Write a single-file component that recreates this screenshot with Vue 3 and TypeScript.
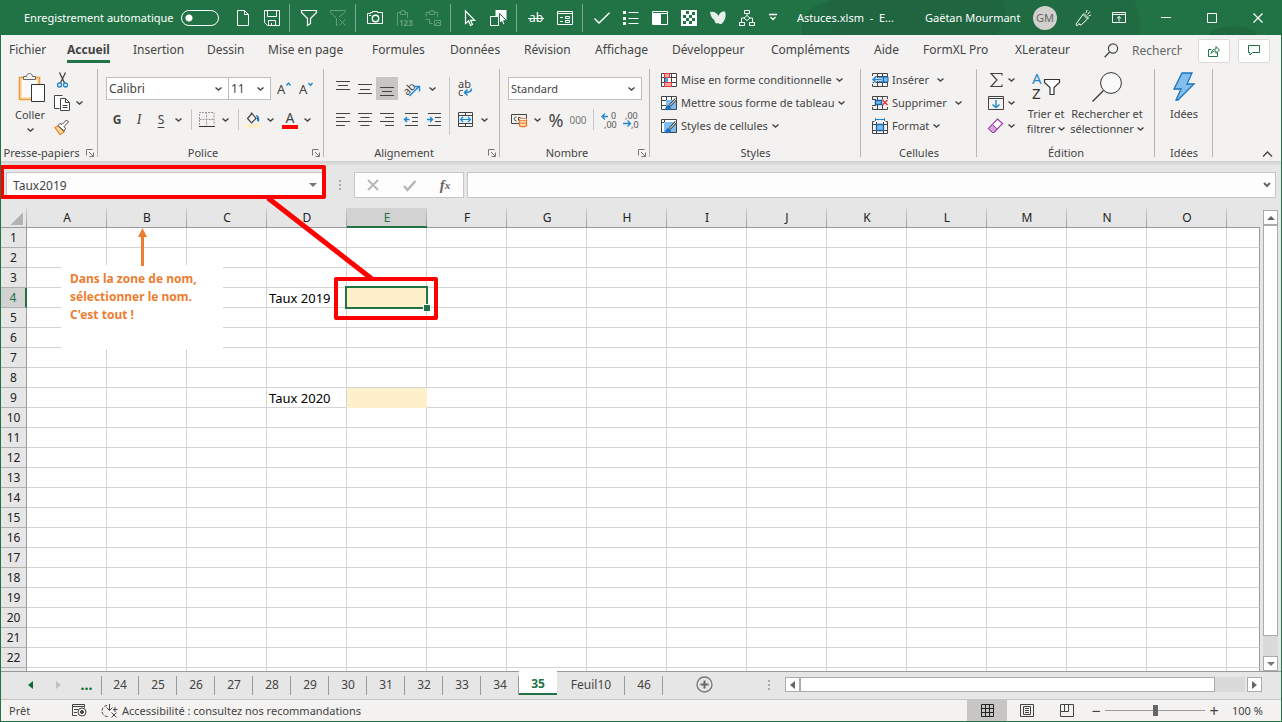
<script setup lang="ts">
import { computed, h, onBeforeUnmount, onMounted, ref } from 'vue'

interface IconShape { w: number; h: number; body: string }

const shapes: Record<string, IconShape> = {
  chevron: { w: 7, h: 4, body: '<path d="M.5 .5l3 2.600 3-2.600" stroke-width="1.400"/>' },
  chevronUp: { w: 11, h: 6, body: '<path d="M1 5.500l4.500-4.500 4.500 4.500" stroke-width="1.400"/>' },
  launcher: { w: 8, h: 8, body: '<path d="M.5 6.500v-6h6M3 3l4 4M7.500 3.500v4h-4" stroke="#777"/>' },
  page: { w: 16, h: 16, body: '<path d="M2.500 .5h7l4 4v11h-11zM9.500 .5v4h4"/>' },
  save: { w: 16, h: 16, body: '<path d="M.5 .5h15v15h-12l-3-3zM3.500 .5v6h9v-6M4.500 15.500v-5h7v5M7.500 13v2"/>' },
  filter: { w: 16, h: 16, body: '<path d="M.5 .5h15v2l-6 6v5l-3 2v-7l-6-6z" stroke-width="1.200"/>' },
  filterOff: { w: 16, h: 16, body: '<path d="M9 7l6.500-5v-1.500h-15v2l6 6v7l1.500-1M9.500 9.500l6 6M15.500 9.500l-6 6"/>' },
  camera: { w: 16, h: 14, body: '<path d="M.5 2.500h3v-1h2v-1h5v1h5v11h-15zM2 4.500h2"/><circle cx="8.500" cy="7.500" r="3.200" stroke-width="1.400"/>' },
  paste123: { w: 16, h: 16, body: '<path d="M4 2.500h-2.500v13M11.500 8v-5.500h-2M4.500 4.500v-3h1.500v-1h2v1h1.500v3z"/><text x="3" y="16" font-size="8" font-weight="700" fill="currentColor" stroke="none">123</text>' },
  pasteShape: { w: 16, h: 16, body: '<path d="M4 2.500h-3v4M.5 9.500h4v4h3M12.500 7v-4.500h-3M4.500 4.500v-3h1.500v-1h2v1h1.500v3zM9.500 10.500h6v5h-6zM10 15l3-3 2 2"/>' },
  cursor: { w: 12, h: 16, body: '<path d="M1.500 1v12.500l3-2.500 2 4.500 2-1-2-4.200h4.200z" stroke-width="1.200"/>' },
  cursorShape: { w: 17, h: 16, body: '<rect x="5.500" y="0" width="11" height="10" fill="#fff" stroke="none"/><path d="M.5 6.500h8v9h-8z" fill="#217346"/><path d="M9.500 3.500v10l2.300-2 1.500 3.500 1.700-1-1.400-3.300h3z" fill="#fff" stroke="#217346"/>' },
  strike: { w: 16, h: 14, body: '<text x="1" y="11" font-size="12" fill="currentColor" stroke="none">ab</text><path d="M0 7.500h16"/>' },
  form: { w: 16, h: 14, body: '<path d="M.5 .5h15v13h-15zM.5 2.500h15M3 6.500h3M3 10.500h3M8.500 5.500h4v2h-4zM8.500 9.500h4v2h-4z"/>' },
  check: { w: 16, h: 12, body: '<path d="M.5 6.500l4.500 4.500L15.500 .8" stroke-width="1.400"/>' },
  list: { w: 16, h: 14, body: '<path d="M5.500 1.500h10M5.500 7.500h10M5.500 12.500h10"/><path d="M0 0h3v3h-3zM0 6h3v3h-3zM0 11h3v3h-3z" fill="currentColor" stroke="none"/>' },
  pane: { w: 16, h: 14, body: '<path d="M.5 .5h15v13h-15zM1 2.500h14"/><path d="M1 3h8v10h-8z" fill="currentColor" stroke="none"/>' },
  checker: { w: 16, h: 16, body: '<rect width="16" height="16" fill="#fff" stroke="none"/><path d="M5 1h3v3h-3zM2 5h3v3h-3zM8 5h3v3h-3zM5 8h3v3h-3zM11 8h3v3h-3zM2 11h3v3h-3zM8 11h3v3h-3zM11 2h3v3h-3z" fill="#217346" stroke="none"/>' },
  butterfly: { w: 16, h: 14, body: '<path d="M0 1c4-1 7 1 8.500 4 1-3 3-5 6.500-4.500 1.500 5 0 9-3 12-2 1-3 .5-3.500-.5-2 1-4 0-4-3-2-1-4-4-4.500-8z" fill="#e8f0eb" stroke="none"/>' },
  tree: { w: 16, h: 16, body: '<path d="M5.500 .5h5v3h-5zM8 3.500v2M8 5.500l3 2.500-3 2.500-3-2.500zM5 8h-2.500v4M11 8h2.500v4M.5 12.500h5v3h-5zM10.500 12.500h5v3h-5z"/>' },
  more: { w: 8, h: 7, body: '<path d="M0 .5h8M1.500 3l2.500 2.500 2.500-2.500" stroke-width="1.300"/>' },
  torch: { w: 16, h: 16, body: '<path d="M1.500 15.500l-.5-1.500 7-9.500 4.500 4.500-6.500 6h-1l-1-1.500-1.500 2zM8 4.500l1-1 4.500 4.500-1 1M11 3l1-3M12.500 4.500l2.500-3M13.500 6l2.500-1"/>' },
  ribbonView: { w: 14, h: 11, body: '<path d="M.5 .5h13v10h-13zM.5 2.500h13M7 9.500v-5M4.800 6.500l2.200-2 2.200 2"/>' },
  minimize: { w: 10, h: 10, body: '<path d="M0 4.500h10"/>' },
  maximize: { w: 10, h: 10, body: '<path d="M.5 .5h9v9h-9z"/>' },
  close: { w: 10, h: 10, body: '<path d="M.5 .5l9 9M9.500 .5l-9 9" stroke-width="1.200"/>' },
  search: { w: 15, h: 15, body: '<circle cx="9" cy="5.500" r="4.600" stroke-width="1.200"/><path d="M5.600 9l-5 5.200" stroke-width="1.300"/>' },
  share: { w: 12, h: 12, body: '<path d="M3.500 4.500h-3v7h9v-4M3 8.500c.5-3 2.500-4.500 5-4.500v-2.500l3.500 3.500-3.500 3.500v-2.500c-2 0-3.500.5-5 2.500z" stroke="#217346"/>' },
  comment: { w: 12, h: 11, body: '<path d="M.5 .5h11v7h-7l-2.500 2.500v-2.500h-1.500z" stroke="#217346"/>' },
  paste: { w: 32, h: 31, body: '<g transform="translate(4 0)"><path d="M1.500 5.500h20v22h-20z" fill="#fbe2ae" stroke="#eb9a3c" stroke-width="1.600"/><path d="M4 8h15v17h-15z" fill="#fafafa" stroke="none"/><path d="M5.500 7.500v-3h3c0-4 6-4 6 0h3v3z" fill="#f3f2f1" stroke="#666"/><path d="M13.500 12.500h13v17h-13z" fill="#fff" stroke="#333"/></g>' },
  cut: { w: 11, h: 16, body: '<path d="M2.500 .5l5 10.500M8.500 .5l-5 10.500" stroke="#444" stroke-width="1.300"/><circle cx="2.500" cy="13" r="2" stroke="#1f86cf" stroke-width="1.300"/><circle cx="8.500" cy="13" r="2" stroke="#1f86cf" stroke-width="1.300"/>' },
  copy: { w: 16, h: 16, body: '<path d="M5.500 13.500h-5v-13h8M6.500 3.500h5l4 4v8h-9z" fill="#fff"/><path d="M11.500 3.500v4h4M8.500 10.500h5M8.500 12.500h5"/>' },
  brush: { w: 16, h: 16, body: '<path d="M1 8.500l3-1.500 6 6-4 2.500z" fill="#fbe2ae" stroke="#eb8a2c" stroke-width="1.300"/><path d="M4 6.500l2-2 2 1 4.500-4.500 2 2-4.500 4.500 1.500 2-1.500 2.500z" fill="#fff" stroke="#444"/>' },
  grow: { w: 14, h: 14, body: '<text x="0" y="12" font-size="13" fill="#444" stroke="none">A</text><path d="M9.500 3.500l2-2.500 2 2.500" stroke="#1f86cf" stroke-width="1.300"/>' },
  shrink: { w: 14, h: 14, body: '<text x="0" y="12" font-size="13" fill="#444" stroke="none">A</text><path d="M9.500 1l2 2.500 2-2.500" stroke="#1f86cf" stroke-width="1.300"/>' },
  border: { w: 16, h: 15, body: '<path d="M.5 13v-12.500h14.500v12.500M.5 7.500h15M7.500 .5v13" stroke="#999" stroke-dasharray="2 1"/><path d="M0 14.500h16" stroke="#333"/>' },
  fill: { w: 16, h: 16, body: '<path d="M2.500 6.500l4.500-5 4 5-4.500 4.500zM5 4l2-3.500" stroke="#444" stroke-width="1.200"/><path d="M11 3c2 .5 4 2 3 7l-2-1.500v-2z" fill="#1f6fbf" stroke="none"/><path d="M0 12h16v4h-16z" fill="#fff0cc" stroke="none"/>' },
  fontColor: { w: 16, h: 18, body: '<text x="3.500" y="12" font-size="14" fill="#444" stroke="none">A</text><path d="M0 14h16v4h-16z" fill="#f00" stroke="none"/>' },
  top: { w: 14, h: 15, body: '<path d="M0 .5h14M2 4.500h10M0 8.500h14"/>' },
  middle: { w: 14, h: 15, body: '<path d="M0 3.500h14M2 8.500h10M0 12.500h14"/>' },
  bottom: { w: 14, h: 15, body: '<path d="M0 6.500h14M2 10.500h10M0 14.500h14"/>' },
  left: { w: 14, h: 13, body: '<path d="M0 .5h14M0 4.500h9M0 8.500h14M0 12.500h9"/>' },
  center: { w: 14, h: 13, body: '<path d="M0 .5h14M2.500 4.500h9M0 8.500h14M2.500 12.500h9"/>' },
  right: { w: 14, h: 13, body: '<path d="M0 .5h14M5 4.500h9M0 8.500h14M5 12.500h9"/>' },
  outdent: { w: 14, h: 13, body: '<path d="M1 .5h13M8 4.500h6M8 8.500h6M1 12.500h13"/><path d="M.5 6.500h5M3 4l-2.500 2.500 2.500 2.500" stroke="#1f86cf" stroke-width="1.400"/>' },
  indent: { w: 14, h: 13, body: '<path d="M1 .5h13M8 4.500h6M8 8.500h6M1 12.500h13"/><path d="M0 6.500h5M3 4l2.500 2.500-2.500 2.500" stroke="#1f86cf" stroke-width="1.400"/>' },
  orient: { w: 17, h: 16, body: '<text x="-1" y="11" font-size="11" fill="#444" stroke="none" transform="rotate(-45 6 8)">ab</text><path d="M5.500 15l9.500-9.500M10.500 5.500h5v5" stroke="#1f86cf" stroke-width="1.400"/>' },
  wrap: { w: 15, h: 17, body: '<text x="0" y="8" font-size="11" fill="#444" stroke="none">ab</text><text x="0" y="16" font-size="11" fill="#444" stroke="none">c</text><path d="M13.500 8.500c0 3-2 4-6 4M9.500 9.500l-3 3 3 3" stroke="#1f86cf" stroke-width="1.500"/>' },
  merge: { w: 15, h: 15, body: '<path d="M.5 .5h14v14h-14zM.5 3.500h14M.5 11.500h14M7.500 .5v3M7.500 11.500v3"/><path d="M1 4h13v7h-13z" fill="#e3f1fb" stroke="none"/><path d="M2.500 7.500h10M5 5l-2.500 2.500 2.500 2.500M10 5l2.500 2.500-2.500 2.500" stroke="#1f86cf" stroke-width="1.200"/>' },
  money: { w: 16, h: 14, body: '<path d="M8 10.500h-7.500v-9h15v4M5.500 4c-3-.5-3 4 0 4M9.500 4.500h-2v3" /><path d="M8.500 6.500v6c0 1.500 7 1.500 7 0v-6" fill="#fbe2ae" stroke="#e8772e" stroke-width="1.300"/><ellipse cx="12" cy="6.500" rx="3.500" ry="1.300" fill="#fff" stroke="#e8772e"/><path d="M8.500 9.500c1 1.200 6 1.200 7 0" stroke="#e8772e"/>' },
  moreDec: { w: 16, h: 16, body: '<text x="10" y="7" font-size="9" fill="#555" stroke="none">0</text><text x="3" y="16" font-size="9" fill="#555" stroke="none">,00</text><path d="M1 4.500h6M4 1.500l-3 3 3 3" stroke="#1f86cf" stroke-width="1.300"/>' },
  lessDec: { w: 16, h: 16, body: '<text x="2" y="7" font-size="9" fill="#555" stroke="none">,00</text><text x="8" y="16" font-size="9" fill="#555" stroke="none">,0</text><path d="M0 11.500h7M4.500 8.500l3 3-3 3" stroke="#1f86cf" stroke-width="1.300"/>' },
  condFmt: { w: 16, h: 15, body: '<path d="M.5 .5h15v13h-15zM.5 4.500h15M.5 9.500h15M3.500 .5v13M10.500 .5v13" fill="#fff"/><path d="M3.500 .5h5v4h-5zM3.500 9.500h7v4h-7z" fill="#f7a5a5" stroke="#e23b3b"/><path d="M4 5h3v4h-3z" fill="#4ea0dc" stroke="none"/>' },
  tableFmt: { w: 16, h: 15, body: '<path d="M.5 .5h15v13h-15zM.5 4.500h15M.5 9.500h15M5.500 .5v13M10.500 .5v13" fill="#fff"/><path d="M5 4h10v9h-10z" fill="#7cbcf0" stroke="none"/><path d="M15 3l-6 6.500" stroke="#444" stroke-width="2.600"/><path d="M15 3l-6 6.500" stroke="#fff"/><path d="M4 14c0-3 2-5 4-5l2 2c0 3-3 3.500-6 3z" fill="#1f6fbf" stroke="none"/>' },
  cellStyle: { w: 16, h: 15, body: '<path d="M.5 .5h15v13h-15zM.5 3.500h15M3.500 .5v13" fill="#fff"/><path d="M3 3h12v10h-12z" fill="#7cbcf0" stroke="none"/><path d="M15 3l-6 6.500" stroke="#444" stroke-width="2.600"/><path d="M15 3l-6 6.500" stroke="#fff"/><path d="M4 14c0-3 2-5 4-5l2 2c0 3-3 3.500-6 3z" fill="#1f6fbf" stroke="none"/>' },
  insert: { w: 16, h: 14, body: '<path d="M.5 3v-2.500h15v13h-15v-2.500M5.500 .5v13M10.500 .5v13M.5 9.500h15M3 3.500h12"/><path d="M7 4h9v5h-9z" fill="#7cbcf0" stroke="#1766ab"/><path d="M11.500 4v5" stroke="#1766ab"/><path d="M1 6.500h8M4 3.500l-3 3 3 3" stroke="#f3f2f1" stroke-width="3"/><path d="M1 6.500h8M4 3.500l-3 3 3 3" stroke="#1f86cf" stroke-width="1.500"/>' },
  remove: { w: 16, h: 14, body: '<path d="M.5 3v-2.500h15v2.500M.5 11v2.500h15v-2.500M5.500 .5v13M10.500 .5v3M10.500 9v4.500M0 3.500h4M0 9.500h4"/><path d="M3.500 4.500h6v4h-6z" fill="#7cbcf0" stroke="#1766ab" stroke-width="1.500"/><path d="M10.500 4l5 5M15.500 4l-5 5" stroke="#e23b3b" stroke-width="1.500"/>' },
  format: { w: 16, h: 16, body: '<path d="M2.500 3.500h-2v12h15v-12h-2M.5 6.500h15M.5 12.500h15M4.500 4v12M11.500 4v12"/><path d="M4.500 6.500h7v6h-7z" fill="#7cbcf0" stroke="#1766ab" stroke-width="1.300"/><path d="M3.500 1.500h9M3.500 0v3M12.500 0v3" stroke="#1f86cf"/>' },
  sum: { w: 13, h: 14, body: '<path d="M12 2.500v-2h-11l6 6.500-6 6.500h11v-2" stroke-width="1.200"/>' },
  fillDown: { w: 16, h: 14, body: '<path d="M.5 .5h15v13h-15zM.5 2.500h15"/><path d="M8 4v7.500M4.500 8.500l3.500 3 3.500-3" stroke="#1f86cf" stroke-width="1.400"/>' },
  eraser: { w: 16, h: 16, body: '<path d="M9.500 1l5 4.500-8.500 9h-1.500l-4-4z" fill="#fff" stroke="#9a3fa8" stroke-width="1.200"/><path d="M4.500 6.500l4.500 4.500-3 3.500h-1.500l-4-4z" fill="#d9a0dc" stroke="#9a3fa8"/>' },
  sort: { w: 29, h: 30, body: '<text x="0" y="12" font-size="15" fill="#1f86cf" stroke="none">A</text><text x="0" y="27" font-size="15" fill="#333" stroke="none">Z</text><path d="M12.500 7.500h15v3l-5.500 5v7h-4v-7l-5.500-5z" fill="#fff" stroke="#333" stroke-width="1.200"/>' },
  find: { w: 30, h: 30, body: '<circle cx="19" cy="11" r="10.400" fill="#fafafa" stroke="#333"/><path d="M11.500 18.500l-11 11" stroke="#333" stroke-width="1.300"/>' },
  bolt: { w: 22, h: 30, body: '<path d="M9 1h10l-5 11h7l-16 16h-2l5-11h-7z" fill="#83beec" stroke="#1a72bd" stroke-width="1.300"/>' },
  cross: { w: 12, h: 12, body: '<path d="M1 1l10 10M11 1l-10 10" stroke="#b5b5b5" stroke-width="1.800"/>' },
  tick: { w: 13, h: 11, body: '<path d="M1 6l3.500 4 8-9" stroke="#b5b5b5" stroke-width="2.400"/>' },
  triDown: { w: 8, h: 4, body: '<path d="M0 0h8l-4 4z" fill="#777" stroke="none"/>' },
  triUp: { w: 8, h: 4, body: '<path d="M0 4h8l-4-4z" fill="#666" stroke="none"/>' },
  triLeft: { w: 5, h: 8, body: '<path d="M5 0v8l-5-4z" fill="currentColor" stroke="none"/>' },
  triRight: { w: 5, h: 8, body: '<path d="M0 0v8l5-4z" fill="currentColor" stroke="none"/>' },
  barChevron: { w: 8, h: 6, body: '<path d="M1 1l3 3 3-3" stroke="#666" stroke-width="2"/>' },
  dots: { w: 2, h: 10, body: '<path d="M0 0h2v2h-2zM0 4h2v2h-2zM0 8h2v2h-2z" fill="#aaa" stroke="none"/>' },
  add: { w: 17, h: 17, body: '<circle cx="8.500" cy="8.500" r="7.500" stroke="#777" stroke-width="1.300"/><path d="M8.500 4.500v8M4.500 8.500h8" stroke="#666" stroke-width="2"/>' },
  macro: { w: 15, h: 13, body: '<path d="M5 11.500h-4.500v-11h12v3M.5 2.500h12M2 5.500h4M2 8.500h3"/><circle cx="10" cy="8" r="4"/><circle cx="10" cy="8" r="1.500" fill="currentColor"/>' },
  access: { w: 16, h: 14, body: '<path d="M5 1.500a5.500 5.500 0 0 0 1 11" stroke-dasharray="3 1.500"/><path d="M7.500 0v6M4.500 3.500l3 3 3-3M13 3v5M11 5.500h4.500M9.500 8.500l5 5M14.500 8.500l-5 5"/>' },
  viewGrid: { w: 13, h: 13, body: '<path d="M.5 .5h12v12h-12zM.5 4.500h12M.5 8.500h12M4.500 .5v12M8.500 .5v12" stroke="#222"/>' },
  viewPage: { w: 14, h: 13, body: '<path d="M.5 .5h13v12h-13zM3.500 2.500h7v8h-7zM5 4.500h4M5 6.500h4M5 8.500h4"/>' },
  viewBreak: { w: 14, h: 13, body: '<path d="M.5 .5h13v12h-13zM4.500 .5v7M8.500 .5v7M.5 7.500h8"/>' },
}

const Icon = (props: { name: string }) => {
  const s = shapes[props.name]
  return h('svg', {
    width: s.w, height: s.h, viewBox: `0 0 ${s.w} ${s.h}`,
    fill: 'none', stroke: 'currentColor', 'aria-hidden': 'true', innerHTML: s.body,
  })
}
Icon.props = ['name']

const quickTools: string[][] = [
  ['page', 'save'],
  ['filter', '-filterOff'],
  ['camera', '-paste123', '-pasteShape'],
  ['cursor', 'cursorShape'],
  ['strike', 'form'],
  ['check', 'list', 'pane', 'checker', 'butterfly', 'tree'],
]
const ribbonTabs = ['Fichier', 'Accueil', 'Insertion', 'Dessin', 'Mise en page', 'Formules', 'Données', 'Révision', 'Affichage', 'Développeur', 'Compléments', 'Aide', 'FormXL Pro', 'XLerateur']
const columns = 'ABCDEFGHIJKLMNO'.split('')
const cells: Record<string, string> = { D4: 'Taux 2019', D9: 'Taux 2020' }
const sheets = ['24', '25', '26', '27', '28', '29', '30', '31', '32', '33', '34', '35', 'Feuil10', '46']
const styleTools = [
  ['condFmt', 'Mise en forme conditionnelle'],
  ['tableFmt', 'Mettre sous forme de tableau'],
  ['cellStyle', 'Styles de cellules'],
]
const cellTools = [['insert', 'Insérer'], ['remove', 'Supprimer'], ['format', 'Format']]

const activeTab = ref('Accueil')
const activeSheet = ref('35')
const nameBox = ref('Taux2019')
const formula = ref('')
const query = ref('')
const autoSave = ref(false)
const zoom = ref(100)

// Number of whole rows that fit; one unlabelled row fills the remainder.
const sheetEl = ref<HTMLElement | null>(null)
const sheetHeight = ref(460)
const fullRows = computed(() => Math.max(1, Math.floor((sheetHeight.value - 20) / 20)))
const measure = () => { if (sheetEl.value) sheetHeight.value = sheetEl.value.clientHeight }
onMounted(() => { measure(); window.addEventListener('resize', measure) })
onBeforeUnmount(() => window.removeEventListener('resize', measure))
</script>

<template>
  <div class="window">
    <header class="titlebar">
      <label class="autosave">Enregistrement automatique
        <input v-model="autoSave" type="checkbox" />
      </label>
      <div v-for="(group, i) in quickTools" :key="i" class="quick">
        <button v-for="t in group" :key="t" :class="{ dim: t[0] === '-' }" :aria-label="t"><Icon :name="t.replace('-', '')" /></button>
      </div>
      <button class="quick-more" aria-label="Personnaliser"><Icon name="more" /></button>
      <div class="doc-title">Astuces.xlsm&nbsp; -&nbsp; E...</div>
      <div class="user">Gaëtan Mourmant</div>
      <div class="avatar">GM</div>
      <div class="win-buttons">
        <button aria-label="Nouveautés"><Icon name="torch" /></button>
        <button aria-label="Affichage du ruban"><Icon name="ribbonView" /></button>
        <button aria-label="Réduire"><Icon name="minimize" /></button>
        <button aria-label="Agrandir"><Icon name="maximize" /></button>
        <button aria-label="Fermer"><Icon name="close" /></button>
      </div>
    </header>

    <nav class="tabs">
      <div class="tab-list">
        <button v-for="t in ribbonTabs" :key="t" :class="{ active: t === activeTab }" @click="activeTab = t"><span>{{ t }}</span></button>
      </div>
      <label class="search"><Icon name="search" /><input v-model="query" type="text" placeholder="Rechercher" aria-label="Rechercher" /></label>
      <button class="card" aria-label="Partager"><Icon name="share" /></button>
      <button class="card" aria-label="Commentaires"><Icon name="comment" /></button>
    </nav>

    <section class="ribbon">
      <div class="group">
        <div class="body clip">
          <button class="big"><Icon name="paste" /><span>Coller</span><Icon name="chevron" /></button>
          <div class="clip-tools">
            <button aria-label="Couper"><Icon name="cut" /></button><i></i>
            <button aria-label="Copier"><Icon name="copy" /></button><button aria-label="Options de copie"><Icon name="chevron" /></button>
            <button aria-label="Reproduire la mise en forme"><Icon name="brush" /></button><i></i>
          </div>
        </div>
        <div class="caption"><span>Presse-papiers</span><button aria-label="Options"><Icon name="launcher" /></button></div>
      </div>

      <div class="group">
        <div class="body two">
          <div class="row font-row">
            <div class="combo"><select aria-label="Police"><option>Calibri</option></select><Icon name="chevron" /></div>
            <div class="combo joined"><select aria-label="Taille"><option>11</option></select><Icon name="chevron" /></div>
            <button aria-label="Agrandir la police"><Icon name="grow" /></button>
            <button aria-label="Réduire la police"><Icon name="shrink" /></button>
          </div>
          <div class="row style-row">
            <button class="bold">G</button>
            <button class="italic">I</button>
            <button class="under">S</button>
            <button aria-label="Soulignement"><Icon name="chevron" /></button>
            <i class="rule"></i>
            <button aria-label="Bordures"><Icon name="border" /></button>
            <button aria-label="Options de bordure"><Icon name="chevron" /></button>
            <i class="rule"></i>
            <button aria-label="Remplissage"><Icon name="fill" /></button>
            <button aria-label="Options de remplissage"><Icon name="chevron" /></button>
            <button aria-label="Couleur de police"><Icon name="fontColor" /></button>
            <button aria-label="Options de couleur"><Icon name="chevron" /></button>
          </div>
        </div>
        <div class="caption"><span>Police</span><button aria-label="Options"><Icon name="launcher" /></button></div>
      </div>

      <div class="group">
        <div class="body align">
          <div class="align-left">
            <div class="row align-row">
              <button aria-label="Haut"><Icon name="top" /></button>
              <button aria-label="Milieu"><Icon name="middle" /></button>
              <button class="pressed" aria-label="Bas"><Icon name="bottom" /></button>
              <button aria-label="Orientation"><Icon name="orient" /></button>
              <button aria-label="Options d'orientation"><Icon name="chevron" /></button>
            </div>
            <div class="row align-row second">
              <button aria-label="Gauche"><Icon name="left" /></button>
              <button aria-label="Centre"><Icon name="center" /></button>
              <button aria-label="Droite"><Icon name="right" /></button>
              <button aria-label="Diminuer le retrait"><Icon name="outdent" /></button>
              <button aria-label="Augmenter le retrait"><Icon name="indent" /></button>
            </div>
          </div>
          <i class="rule tall"></i>
          <div class="align-right">
            <div class="row merge-row"><button aria-label="Renvoyer à la ligne"><Icon name="wrap" /></button></div>
            <div class="row merge-row"><button aria-label="Fusionner"><Icon name="merge" /></button><button aria-label="Options de fusion"><Icon name="chevron" /></button></div>
          </div>
        </div>
        <div class="caption"><span>Alignement</span><button aria-label="Options"><Icon name="launcher" /></button></div>
      </div>

      <div class="group">
        <div class="body two">
          <div class="row"><div class="combo wide"><select aria-label="Format de nombre"><option>Standard</option></select><Icon name="chevron" /></div></div>
          <div class="row number-row">
            <button aria-label="Monétaire"><Icon name="money" /></button>
            <button aria-label="Options monétaires"><Icon name="chevron" /></button>
            <button class="percent">%</button>
            <button class="thousand">000</button>
            <i class="rule"></i>
            <button aria-label="Ajouter une décimale"><Icon name="moreDec" /></button>
            <button aria-label="Réduire les décimales"><Icon name="lessDec" /></button>
          </div>
        </div>
        <div class="caption"><span>Nombre</span><button aria-label="Options"><Icon name="launcher" /></button></div>
      </div>

      <div class="group">
        <div class="body stack">
          <button v-for="[icon, label] in styleTools" :key="icon" class="tool"><Icon :name="icon" /><span>{{ label }}</span><Icon name="chevron" /></button>
        </div>
        <div class="caption solo">Styles</div>
      </div>

      <div class="group">
        <div class="body stack">
          <button v-for="[icon, label] in cellTools" :key="icon" class="tool" :class="{ split: icon !== 'format' }"><Icon :name="icon" /><span>{{ label }}</span><Icon name="chevron" /></button>
        </div>
        <div class="caption solo">Cellules</div>
      </div>

      <div class="group">
        <div class="body edit">
          <div class="edit-tools">
            <button aria-label="Somme"><Icon name="sum" /><Icon name="chevron" /></button>
            <button aria-label="Recopier"><Icon name="fillDown" /><Icon name="chevron" /></button>
            <button aria-label="Effacer"><Icon name="eraser" /><Icon name="chevron" /></button>
          </div>
          <button class="big"><Icon name="sort" /><span>Trier et<br />filtrer <Icon name="chevron" /></span></button>
          <button class="big"><Icon name="find" /><span>Rechercher et<br />sélectionner <Icon name="chevron" /></span></button>
        </div>
        <div class="caption solo">Édition</div>
      </div>

      <div class="group">
        <div class="body ideas"><button class="big"><Icon name="bolt" /><span>Idées</span></button></div>
        <div class="caption solo">Idées</div>
      </div>
      <div class="collapse"><button aria-label="Réduire le ruban"><Icon name="chevronUp" /></button></div>
    </section>

    <section class="formula-bar">
      <div class="name-box"><input v-model="nameBox" type="text" aria-label="Zone de nom" /><button aria-label="Noms"><Icon name="triDown" /></button></div>
      <div class="grip"><Icon name="dots" /></div>
      <div class="fx-buttons">
        <button aria-label="Annuler"><Icon name="cross" /></button>
        <button aria-label="Entrer"><Icon name="tick" /></button>
        <button class="fx">f<sub>x</sub></button>
      </div>
      <div class="formula"><input v-model="formula" type="text" aria-label="Barre de formule" /><button aria-label="Développer"><Icon name="barChevron" /></button></div>
    </section>

    <main class="workspace">
      <div ref="sheetEl" class="sheet">
        <table>
          <colgroup><col class="col-head" /><col v-for="c in columns" :key="c" class="col" /><col /></colgroup>
          <thead>
            <tr>
              <th class="corner"><i></i></th>
              <th v-for="c in columns" :key="c" :class="{ on: c === 'E' }">{{ c }}</th>
              <th class="rest"></th>
            </tr>
          </thead>
          <tbody>
            <tr v-for="r in fullRows + 1" :key="r">
              <th :class="{ on: r === 4 }">{{ r > fullRows ? '' : r }}</th>
              <td v-for="c in columns" :key="c" :class="{ input: c === 'E' && (r === 4 || r === 9), selected: c === 'E' && r === 4 }">{{ cells[c + r] }}</td>
              <td class="rest"></td>
            </tr>
          </tbody>
        </table>
        <div class="note">Dans la zone de nom,<br />sélectionner le nom.<br />C'est tout !</div>
      </div>
      <div class="vscroll">
        <button aria-label="Haut"><Icon name="triUp" /></button>
        <div class="thumb"></div>
        <div class="track"></div>
        <button aria-label="Bas"><Icon name="triDown" /></button>
      </div>
    </main>

    <footer class="sheet-bar">
      <div class="sheet-nav">
        <button class="prev" aria-label="Précédent"><Icon name="triLeft" /></button>
        <button class="next" aria-label="Suivant"><Icon name="triRight" /></button>
        <button class="ellipsis">...</button>
      </div>
      <button v-for="s in sheets" :key="s" class="sheet-tab" :class="{ active: s === activeSheet, long: s.length > 2 }" @click="activeSheet = s"><span>{{ s }}</span></button>
      <button class="add" aria-label="Nouvelle feuille"><Icon name="add" /></button>
      <div class="hscroll">
        <Icon name="dots" />
        <button aria-label="Gauche"><Icon name="triLeft" /></button>
        <div class="thumb"></div>
        <div class="track"></div>
        <button aria-label="Droite"><Icon name="triRight" /></button>
      </div>
    </footer>

    <footer class="status">
      <span class="ready">Prêt</span>
      <Icon name="macro" />
      <button class="access"><Icon name="access" />Accessibilité : consultez nos recommandations</button>
      <div class="views">
        <button class="pressed" aria-label="Normal"><Icon name="viewGrid" /></button>
        <button aria-label="Mise en page"><Icon name="viewPage" /></button>
        <button aria-label="Sauts de page"><Icon name="viewBreak" /></button>
      </div>
      <button class="step" aria-label="Zoom arrière">−</button>
      <input v-model="zoom" type="range" min="0" max="200" aria-label="Zoom" />
      <button class="step" aria-label="Zoom avant">+</button>
      <span class="percent-value">{{ zoom }} %</span>
    </footer>

    <svg class="marks" aria-hidden="true">
      <g fill="none" stroke="#f00" stroke-width="4" stroke-linejoin="round">
        <rect x="2" y="167" width="322" height="30" />
        <rect x="336" y="279" width="100" height="39" />
        <path d="M268 198L372 279" stroke-width="5" />
      </g>
      <path d="M142.500 266V236" stroke="#ed7d31" stroke-width="3" />
      <path d="M142.500 228l4.500 9h-9z" fill="#ed7d31" />
    </svg>
  </div>
</template>

<style>
body { margin: 0; }
</style>

<style scoped>
* { box-sizing: border-box; }
.window {
  position: relative;
  display: flex;
  flex-direction: column;
  height: 100vh;
  overflow: hidden;
  border: solid #217346;
  border-width: 0 1px 1px;
  background: #e6e6e6;
  color: #444;
  font: 12px/16px "Noto Sans", "Open Sans", sans-serif;
}
button, input, select { font: inherit; color: inherit; }
button {
  display: flex;
  align-items: center;
  justify-content: center;
  padding: 0;
  border: 0;
  background: none;
}
svg { flex: none; overflow: visible; }

.titlebar {
  display: flex;
  align-items: center;
  height: 35px;
  flex: none;
  color: #fff;
  font-size: 11px;
  background:
    radial-gradient(ellipse 90px 50px at 915px 12px, #1e6540 98%, transparent),
    radial-gradient(circle at 828px 30px, #1f6941 27px, transparent 28px),
    radial-gradient(ellipse 75px 60px at 1065px 24px, #206b42 98%, transparent),
    radial-gradient(ellipse 24px 8px at 1232px 34px, #1f6941 95%, transparent),
    #217346;
}
.autosave { display: flex; align-items: center; gap: 7px; width: 227px; padding-left: 23px; white-space: nowrap; }
.autosave input {
  appearance: none;
  flex: none;
  width: 38px;
  height: 16px;
  margin: 0;
  border: 1px solid #fff;
  border-radius: 8px;
  background: radial-gradient(circle at 7px 7px, #fff 3px, transparent 4px);
}
.quick { display: flex; }
.quick + .quick { padding-left: 8px; background: linear-gradient(#76ab8d, #76ab8d) 3px 50% / 1px 28px no-repeat; }
.quick button { width: 29px; height: 35px; }
.quick .dim { opacity: .3; }
.quick-more { width: 24px; }
.doc-title { width: 140px; padding-left: 12px; white-space: nowrap; }
.user { width: 108px; white-space: nowrap; }
.avatar { width: 24px; height: 24px; border-radius: 50%; background: #d2d0ce; color: #666; line-height: 24px; text-align: center; }
.win-buttons { display: flex; margin-left: auto; }
.win-buttons button { width: 46px; height: 35px; }
.win-buttons button:nth-child(-n+2) { width: 36px; }
.win-buttons button:nth-child(2) { margin-right: 6px; }

.tabs { display: flex; height: 31px; flex: none; align-items: center; background: #f3f2f1; }
.tab-list { display: grid; grid-template-columns: 58px 66px 74px 61px 104px 78px 74px 71px 77px 99px 103px 49px 92px 66px; padding-left: 8px; }
.tab-list button { justify-content: flex-start; white-space: nowrap; }
.tab-list span { padding: 4px 0 2px; border-bottom: 3px solid transparent; }
.tab-list .active { font-weight: 700; }
.tab-list .active span { border-color: #217346; }
.search { display: flex; flex: 1; align-items: center; gap: 13px; margin: 0 16px 0 23px; }
.search input { flex: 1; min-width: 0; width: 50px; padding: 0; border: 0; outline: 0; background: none; }
.search input::placeholder { color: #666; opacity: 1; }
.card { flex: none; width: 32px; height: 24px; margin-right: 8px; border: 1px solid #dddbd9; border-radius: 2px; background: #fff; }
.card:last-child { margin-right: 12px; }

.ribbon {
  display: grid;
  grid-template-columns: 97px 226px 176px 150px 211px 116px 178px 58px 1fr;
  flex: none;
  height: 95px;
  background: #f3f2f1;
  font-size: 11px;
}
.group { display: flex; flex-direction: column; background: linear-gradient(#b8b6b4, #b8b6b4) right 3px / 1px 88px no-repeat; }
.body { flex: 1; min-height: 0; }
.caption { display: grid; grid-template-columns: 1fr 16px; height: 16px; text-align: center; white-space: nowrap; }
.caption.solo { display: block; }
.rule { justify-self: center; width: 1px; height: 21px; background: #c8c6c4; }
.row { display: grid; height: 23px; align-items: center; }
.two { display: flex; flex-direction: column; gap: 8px; padding: 11px 0 0 8px; }
.big { flex-direction: column; justify-content: flex-start; line-height: 15px; white-space: nowrap; }
.big > svg:first-child { margin-bottom: 4px; }
.big span svg { vertical-align: 2px; }
.clip { display: grid; grid-template-columns: 50px 1fr; padding: 6px 0 0 4px; }
.clip > .big > svg:last-child { margin-top: 6px; }
.clip-tools { display: grid; grid-template-columns: 14px 20px; grid-template-rows: 16px 30px 18px; align-items: center; }
.clip-tools button { justify-self: center; }
.font-row { grid-template-columns: 123px 42px 25px 20px; }
.style-row { grid-template-columns: 22px 22px 22px 13px 13px 18px 18px 8px 22px 12px 28px 7px; }
.bold { font-weight: 700; font-size: 12px; }
.italic { font: italic 14px "Liberation Serif", serif; }
.under { text-decoration: underline; text-underline-offset: 3px; font-size: 12px; }
.combo { display: grid; grid-template-columns: 1fr 14px; align-items: center; }
.combo select { grid-area: 1 / 1 / 2 / 3; appearance: none; width: 100%; height: 23px; padding: 0 2px; border: 1px solid #c0bebc; border-radius: 0; background: #fff; font-size: 12px; }
.combo svg { grid-area: 1 / 2; z-index: 1; pointer-events: none; }
.joined select { border-left: 0; }
.combo.wide { width: 134px; }
.combo.wide select { font-size: 11px; }
.align { display: grid; grid-template-columns: 117px 1px 1fr; padding: 11px 0 0 8px; }
.align-left, .align-right { display: grid; gap: 8px; align-content: start; }
.align-row { grid-template-columns: 22px 22px 22px 28px 12px; }
.align-row.second { grid-template-columns: 22px 22px 22px 26px 20px; }
.align-row button { height: 23px; }
.pressed { background: #c8c6c4; }
.rule.tall { height: 58px; }
.merge-row { grid-template-columns: 30px 8px; }
.number-row { grid-template-columns: 22px 14px 24px 20px 10px 22px 22px; }
.percent { font-size: 18px; }
.thousand { font-size: 10px; color: #777; }
.stack { display: flex; flex-direction: column; gap: 1px; align-items: flex-start; padding: 3px 0 0 11px; }
.tool { height: 22px; gap: 4px; white-space: nowrap; }
.tool.split svg:last-child { margin-left: 4px; }
.edit { display: grid; grid-template-columns: 46px 46px 76px; }
.edit-tools { display: flex; flex-direction: column; gap: 1px; padding: 3px 0 0 10px; }
.edit-tools button { display: grid; grid-template-columns: 18px 12px; place-items: center; justify-content: start; height: 22px; }
.edit .big, .ideas .big { padding-top: 6px; }
.ideas .big { width: 100%; }
.collapse { display: flex; align-items: flex-end; justify-content: flex-end; padding: 0 8px 4px; }

.formula-bar {
  display: flex;
  flex: none;
  height: 47px;
  padding: 11px 5px 10px;
  background: linear-gradient(#cfcfcf, #e6e6e6 5px);
}
.name-box { display: flex; width: 319px; background: #fdfdfd; border: 1px solid #c6c6c6; }
.name-box input, .formula input { flex: 1; min-width: 0; padding: 2px 6px 0; border: 0; outline: 0; background: none; }
.name-box button { width: 22px; }
.grip { display: flex; align-items: center; justify-content: center; width: 29px; }
.fx-buttons { display: grid; grid-template-columns: repeat(3, 1fr); width: 110px; border: 1px solid #c6c6c6; background: #fdfdfd; }
.fx { color: #666; font: italic 700 15px "Liberation Serif", serif; }
.fx sub { font-size: 11px; }
.formula { display: flex; flex: 1; margin-left: 3px; border: 1px solid #c6c6c6; background: #fdfdfd; }
.formula button { width: 16px; }

.workspace { display: flex; flex: 1; min-height: 0; }
.sheet { position: relative; flex: 1; min-width: 0; overflow: hidden; }
table { width: 100%; table-layout: fixed; border-spacing: 0; background: #fff; color: #000; }
.col-head { width: 26px; }
.col { width: 80px; }
tr { height: 20px; }
th, td { height: 20px; padding: 1px 0 0; font-size: 12px; line-height: 18px; }
th { font-weight: 400; color: #222; background: #e6e6e6; text-align: center; }
thead th { padding: 0; border-bottom: 1px solid #9b9b9b; background: linear-gradient(#d0d0d0, #9b9b9b) right 0 / 1px 100% no-repeat #e6e6e6; }
thead .rest { background: #e6e6e6; }
tbody th { border-right: 1px solid #9b9b9b; border-bottom: 1px solid #b0b0b0; }
thead .on { padding-top: 1px; line-height: 17px; border-bottom: 2px solid #217346; }
.on, thead .on { color: #217346; background-color: #d2d2d2; }
tbody .on { border-right: 2px solid #217346; }
.corner i { display: block; width: 12px; height: 12px; margin: 3px 0 0 10px; background: linear-gradient(135deg, transparent 50%, #b2b2b2 50%); }
td { position: relative; padding-left: 2px; border: solid #d4d4d4; border-width: 0 1px 1px 0; font-size: 13px; white-space: nowrap; }
td.rest { border-right-color: #9b9b9b; }
td.input { border-color: #fff0cc; background: #fff0cc; }
td.selected { z-index: 1; }
.selected::before { content: ""; position: absolute; inset: -2px; border: 2px solid #217346; }
.selected::after { content: ""; position: absolute; right: -4px; bottom: -4px; width: 6px; height: 6px; border: solid #fff; border-width: 1px 0 0 1px; background: #217346; }
.note { position: absolute; left: 60px; top: 57px; width: 162px; height: 84px; padding: 5px 9px; background: #fff; color: #ed7d31; font-weight: 700; line-height: 18px; white-space: nowrap; }

.vscroll { display: flex; flex-direction: column; flex: none; width: 15px; margin: 2px 3px 0; background: #dadada; }
.vscroll button, .hscroll button { flex: none; width: 15px; height: 15px; border: 1px solid #ababab; background: #fff; }
.vscroll .thumb { flex: 412; border: 1px solid #ababab; background: #fff; }
.vscroll .track { flex: 20; }

.sheet-bar { display: flex; flex: none; height: 29px; padding-bottom: 2px; border-top: 1px solid #999; border-bottom: 1px solid #c6c6c6; }
.sheet-nav { display: grid; grid-template-columns: 28px 28px 29px; padding-left: 15px; width: 100px; }
.prev { color: #0e6b35; }
.next { color: #c0c0c0; }
.ellipsis { color: #0e6b35; font-weight: 700; font-size: 14px; }
.sheet-tab { width: 38px; background: linear-gradient(#999, #999) right 4px / 1px 19px no-repeat; }
.sheet-tab:nth-child(2) { background: linear-gradient(#999, #999) left 4px / 1px 19px no-repeat, linear-gradient(#999, #999) right 4px / 1px 19px no-repeat; }
.sheet-tab.long { width: 68px; }
.sheet-tab.active { margin-top: -1px; margin-bottom: 2px; padding-top: 4px; border-bottom: 2px solid #217346; background: #fff; color: #217346; font-weight: 700; }
.add { margin-left: 33px; }
.hscroll { display: flex; align-items: center; flex: 1; max-width: 494px; margin: 0 19px 0 auto; }
.hscroll > svg { margin-right: 15px; }
.hscroll .thumb { flex: 414; height: 15px; border: 1px solid #ababab; background: #fff; }
.hscroll .track { flex: 30; height: 15px; margin-right: 2px; background: #dadada; }
.hscroll button { color: #666; }

.status { display: flex; flex: none; align-items: center; height: 21px; background: #f3f2f1; font-size: 11px; }
.ready { width: 71px; padding-left: 8px; }
.access { margin-left: 15px; gap: 4px; }
.views { display: flex; margin-left: auto; }
.views button { width: 40px; height: 21px; }
.step { width: 18px; font-size: 16px; }
.status input { appearance: none; width: 100px; height: 11px; margin: 0; background: linear-gradient(#999, #999) 0 50% / 100% 1px no-repeat; }
.status input::-webkit-slider-thumb { appearance: none; width: 5px; height: 11px; background: #666; }
.percent-value { width: 58px; padding-left: 9px; white-space: nowrap; }

.marks { position: absolute; top: 0; left: -1px; width: 100%; height: 100%; pointer-events: none; }
</style>
